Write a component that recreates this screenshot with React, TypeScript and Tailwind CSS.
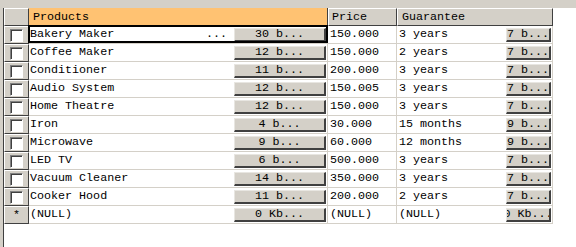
type Row = {
  name: string;
  blob: string;
  price: string;
  guarantee: string;
  gblob: string;
  isNew?: boolean;
};

const rows: Row[] = [
  { name: 'Bakery Maker', blob: '30 b...', price: '150.000', guarantee: '3 years', gblob: '7 b...' },
  { name: 'Coffee Maker', blob: '12 b...', price: '150.000', guarantee: '2 years', gblob: '7 b...' },
  { name: 'Conditioner', blob: '11 b...', price: '200.000', guarantee: '3 years', gblob: '7 b...' },
  { name: 'Audio System', blob: '12 b...', price: '150.005', guarantee: '3 years', gblob: '7 b...' },
  { name: 'Home Theatre', blob: '12 b...', price: '150.000', guarantee: '3 years', gblob: '7 b...' },
  { name: 'Iron', blob: '4 b...', price: '30.000', guarantee: '15 months', gblob: '9 b...' },
  { name: 'Microwave', blob: '9 b...', price: '60.000', guarantee: '12 months', gblob: '9 b...' },
  { name: 'LED TV', blob: '6 b...', price: '500.000', guarantee: '3 years', gblob: '7 b...' },
  { name: 'Vacuum Cleaner', blob: '14 b...', price: '350.000', guarantee: '3 years', gblob: '7 b...' },
  { name: 'Cooker Hood', blob: '11 b...', price: '200.000', guarantee: '2 years', gblob: '7 b...' },
  { name: '(NULL)', blob: '0 Kb...', price: '(NULL)', guarantee: '(NULL)', gblob: '0 Kb...', isNew: true },
];

function BlobButton({ label, width }: { label: string; width: string }) {
  return (
    <div
      className={`${width} flex h-[14px] shrink-0 items-center justify-center overflow-hidden whitespace-pre border-t border-l border-t-[#e8e6e1] border-l-[#e8e6e1] border-r-2 border-b-2 border-r-[#404040] border-b-[#404040] bg-[#d4d0c8] pt-[1px] leading-none`}
    >
      {label}
    </div>
  );
}

function Selector({ isNew }: { isNew?: boolean }) {
  return (
    <div className="flex h-full w-[25px] shrink-0 items-center justify-center border-t border-l border-t-white border-l-white border-r border-b border-r-[#404040] border-b-[#404040] bg-[#d4d0c8]">
      {isNew ? (
        <span className="pt-[2px] leading-none">*</span>
      ) : (
        <div className="h-[13px] w-[13px] border-t border-l border-t-[#808080] border-l-[#808080] border-r border-b border-r-white border-b-white bg-white shadow-[inset_1px_1px_0_#404040]" />
      )}
    </div>
  );
}

export default function App() {
  return (
    <div className="h-[247px] w-[576px] overflow-hidden bg-white font-['Liberation_Mono',monospace] text-[11.7px] text-black">
      <div className="h-[8px] bg-[#d4d0c8]" />
      <div className="flex h-[239px]">
        <div className="w-[4px] shrink-0 border-r border-[#404040] bg-[#d4d0c8]" />
        <div className="flex flex-col">
          {/* header */}
          <div className="flex h-[18px]">
            <div className="h-full w-[25px] shrink-0 border-t border-l border-t-white border-l-white border-r border-b border-r-[#404040] border-b-[#404040] bg-[#d4d0c8]" />
            <div className="flex h-full w-[299px] shrink-0 items-center border-r border-b border-[#404040] bg-[#ffc272] pt-[2px] pl-[4px]">
              Products
            </div>
            <div className="flex h-full w-[69px] shrink-0 items-center border-t border-l border-t-white border-l-white border-r border-b border-r-[#404040] border-b-[#404040] bg-[#d4d0c8] pt-[1px] pl-[3px]">
              Price
            </div>
            <div className="flex h-full w-[156px] shrink-0 items-center border-t border-l border-t-white border-l-white border-r border-b border-r-[#404040] border-b-[#404040] bg-[#d4d0c8] pt-[1px] pl-[4px]">
              Guarantee
            </div>
          </div>
          {/* rows */}
          {rows.map((r, i) => (
            <div key={i} className="flex h-[18px]">
              <Selector isNew={r.isNew} />
              <div className="relative flex h-full w-[299px] shrink-0 items-center border-r border-b border-[#d4d0c8] pt-[1px] pl-[1px] pr-[1px] whitespace-pre">
                <span className="flex-1">{r.name}</span>
                {i === 0 && <span className="w-[28px]">...</span>}
                <BlobButton label={r.blob} width="w-[92px]" />
                {i === 0 && (
                  <div className="pointer-events-none absolute -top-[1px] -left-[1px] -right-[1px] bottom-0 border-2 border-black" />
                )}
              </div>
              <div className="flex h-full w-[69px] shrink-0 items-center border-r border-b border-[#d4d0c8] pt-[1px] pl-[2px] whitespace-pre">
                {r.price}
              </div>
              <div className="flex h-full w-[156px] shrink-0 items-center border-r border-b border-[#d4d0c8] pt-[1px] pl-[2px] pr-[1px] whitespace-pre">
                <span className="flex-1">{r.guarantee}</span>
                <BlobButton label={r.gblob} width="w-[45px]" />
              </div>
            </div>
          ))}
        </div>
      </div>
    </div>
  );
}
